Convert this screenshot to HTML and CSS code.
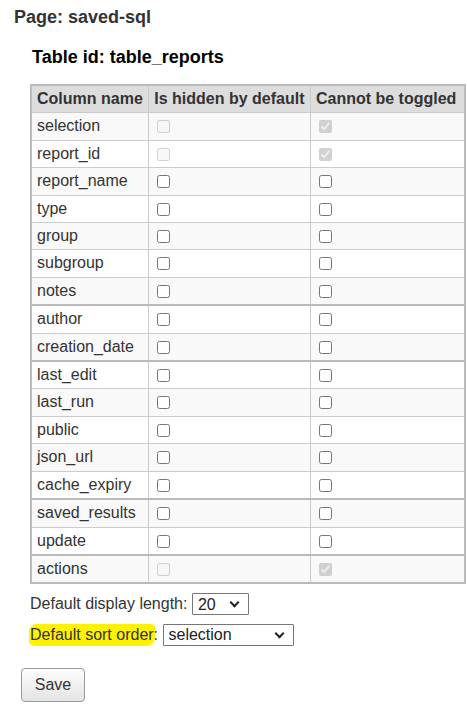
FILE: index.html
```html
<!DOCTYPE html>
<html>
<head>
<meta charset="utf-8">
<link rel="stylesheet" href="styles.css">
</head>
<body>
<h2 class="page-title">Page: saved-sql</h2>
<div class="section">
  <h3 class="table-title">Table id: table_reports</h3>
  <table class="cols">
    <colgroup><col class="c1"><col class="c2"><col class="c3"></colgroup>
    <thead>
      <tr><th>Column name</th><th>Is hidden by default</th><th>Cannot be toggled</th></tr>
    </thead>
    <tbody>
      <tr class="odd"><td>selection</td><td><input type="checkbox" disabled></td><td><input type="checkbox" checked disabled></td></tr>
      <tr><td>report_id</td><td><input type="checkbox" disabled></td><td><input type="checkbox" checked disabled></td></tr>
      <tr class="odd"><td>report_name</td><td><input type="checkbox"></td><td><input type="checkbox"></td></tr>
      <tr><td>type</td><td><input type="checkbox"></td><td><input type="checkbox"></td></tr>
      <tr class="odd"><td>group</td><td><input type="checkbox"></td><td><input type="checkbox"></td></tr>
      <tr><td>subgroup</td><td><input type="checkbox"></td><td><input type="checkbox"></td></tr>
      <tr class="odd"><td>notes</td><td><input type="checkbox"></td><td><input type="checkbox"></td></tr>
      <tr class="grp"><td>author</td><td><input type="checkbox"></td><td><input type="checkbox"></td></tr>
      <tr class="odd"><td>creation_date</td><td><input type="checkbox"></td><td><input type="checkbox"></td></tr>
      <tr class="grp"><td>last_edit</td><td><input type="checkbox"></td><td><input type="checkbox"></td></tr>
      <tr class="odd"><td>last_run</td><td><input type="checkbox"></td><td><input type="checkbox"></td></tr>
      <tr><td>public</td><td><input type="checkbox"></td><td><input type="checkbox"></td></tr>
      <tr class="odd"><td>json_url</td><td><input type="checkbox"></td><td><input type="checkbox"></td></tr>
      <tr><td>cache_expiry</td><td><input type="checkbox"></td><td><input type="checkbox"></td></tr>
      <tr class="odd grp"><td>saved_results</td><td><input type="checkbox"></td><td><input type="checkbox"></td></tr>
      <tr><td>update</td><td><input type="checkbox"></td><td><input type="checkbox"></td></tr>
      <tr class="odd grp"><td>actions</td><td><input type="checkbox" disabled></td><td><input type="checkbox" checked disabled></td></tr>
    </tbody>
  </table>
  <div class="field">Default display length: <span class="selwrap"><select class="sel sel-len"><option>20</option></select></span></div>
  <div class="field"><span class="mark">Default sort order</span>: <span class="selwrap"><select class="sel sel-sort"><option>selection</option></select></span></div>
</div>
<button class="save">Save</button>
</body>
</html>
```
FILE: styles.css
```css
body {
  margin: 0;
  padding: 6px 0 0 14px;
  font-family: "Liberation Sans", Arial, sans-serif;
  font-size: 16px;
  color: #333;
  background: #fff;
}
.page-title {
  margin: 0;
  font-size: 18px;
  font-weight: bold;
  color: #333;
  line-height: 22px;
}
.section {
  padding-left: 16px;
}
.table-title {
  margin: 18px 0 0 2px;
  font-size: 18px;
  font-weight: bold;
  color: #000;
  line-height: 22px;
}
.cols {
  margin-top: 16px;
  border-collapse: collapse;
  border: 2px solid #bbb;
  width: 436px;
}
.c1 { width: 118px; }
.c2 { width: 162px; }
.c3 { width: 156px; }
.cols th,
.cols td {
  border: 1px solid #ccc;
  padding: 4px 5px;
  text-align: left;
  line-height: 18.4px;
  height: 18.4px;
  white-space: nowrap;
}
.cols th {
  background: #ddd;
  font-weight: bold;
  color: #333;
}
.cols tr.odd td {
  background: #f9f9f9;
}
.cols tr.grp td {
  border-top: 2px solid #bbb;
}
.cols input {
  margin: 0 0 0 3px;
  width: 13px;
  height: 13px;
  vertical-align: -2px;
}
.field {
  margin-top: 9px;
  line-height: 22px;
}
.field + .field {
  margin-top: 8px;
}
.mark {
  background: #fff200;
  border-radius: 6px 3px 7px 4px;
  padding: 1px 0 2px;
  box-shadow: 0 0 0 1px #fff200;
}
.selwrap {
  position: relative;
  display: inline-block;
  vertical-align: top;
}
.selwrap::after {
  content: "";
  position: absolute;
  right: 11px;
  top: 6px;
  width: 5px;
  height: 5px;
  border-right: 2px solid #222;
  border-bottom: 2px solid #222;
  transform: rotate(45deg);
  pointer-events: none;
}
.sel {
  -webkit-appearance: none;
  appearance: none;
  font-family: "Liberation Sans", Arial, sans-serif;
  font-size: 16px;
  color: #222;
  height: 22px;
  border: 1px solid #767676;
  border-radius: 1px;
  background: #fff;
  padding: 0 0 0 5px;
  margin: 0;
}
.sel-len { width: 57px; }
.sel-sort { width: 131px; }
.save {
  margin: 22px 0 0 7px;
  width: 64px;
  height: 34px;
  font-family: "Liberation Sans", Arial, sans-serif;
  font-size: 16px;
  color: #333;
  border: 1px solid #999;
  border-radius: 4px;
  background: linear-gradient(#fdfdfd, #e4e4e4);
}
```
